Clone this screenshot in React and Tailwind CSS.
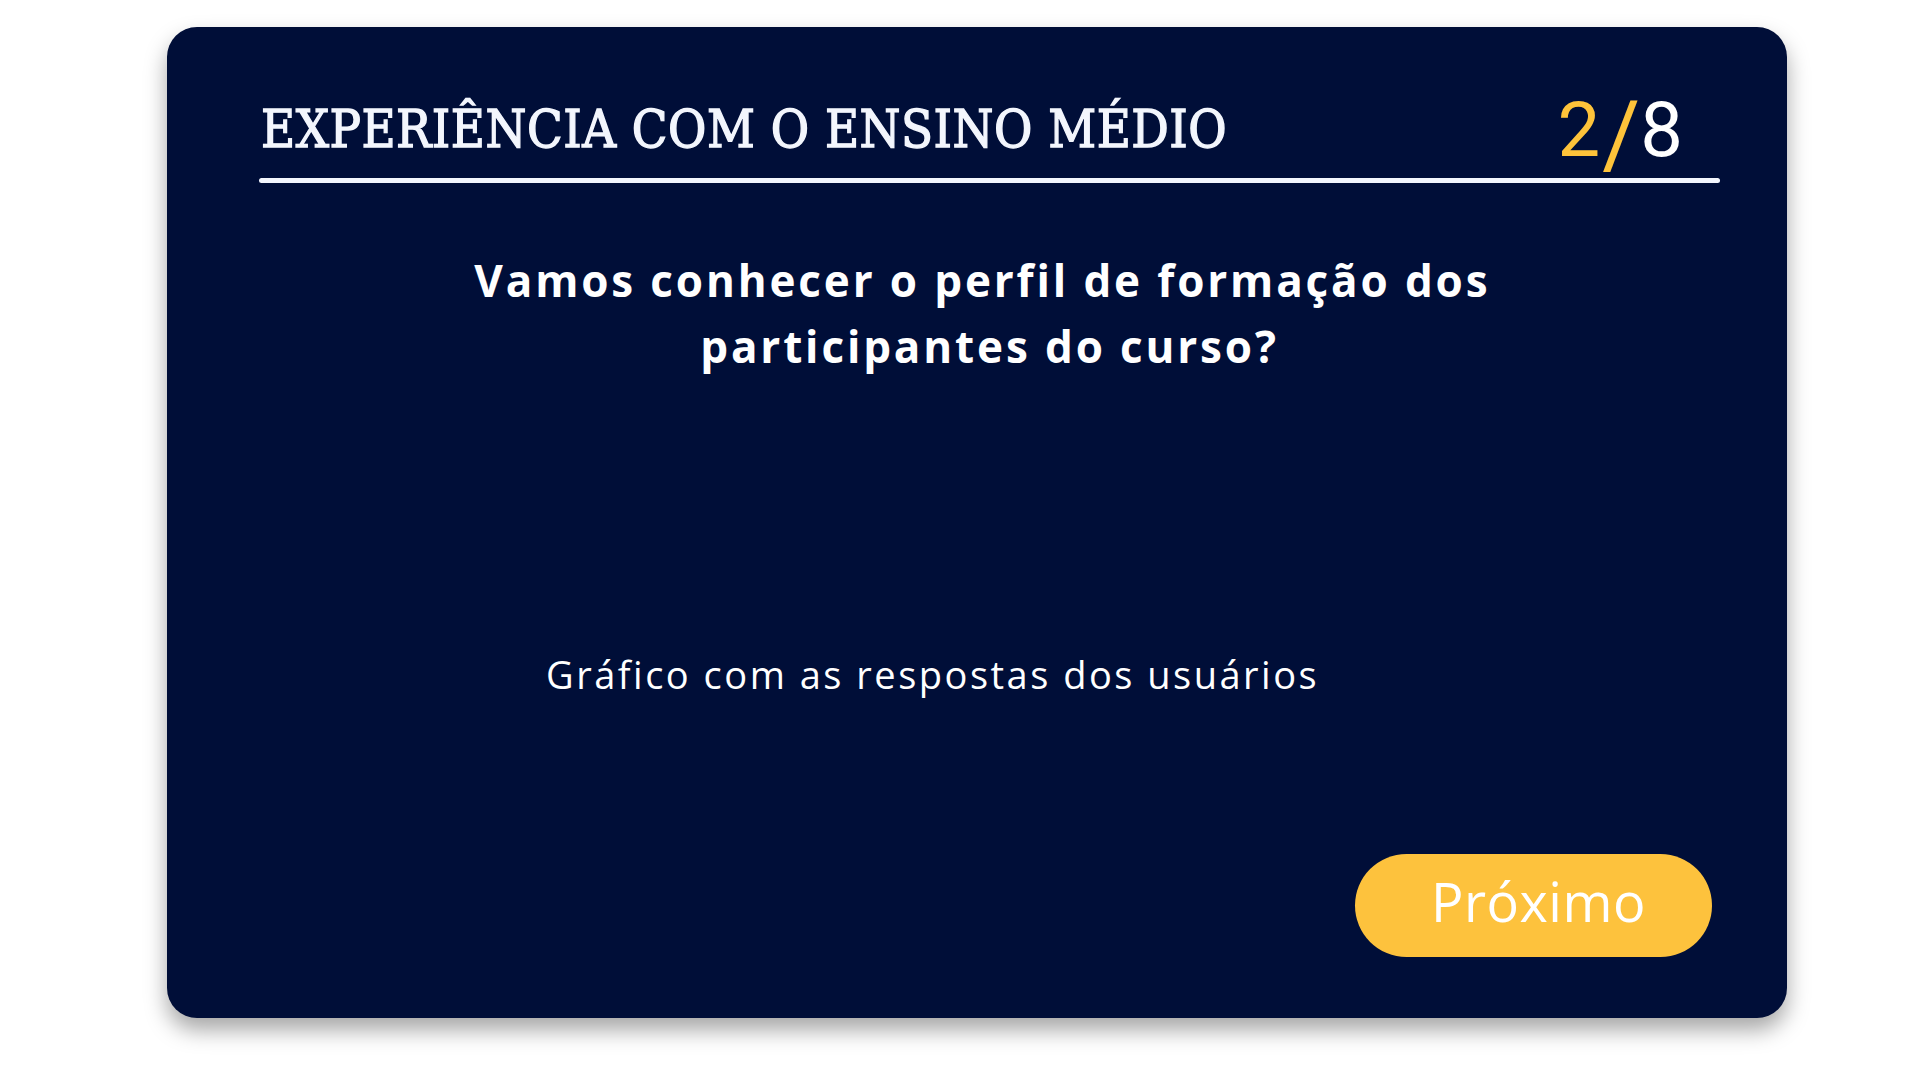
import React from 'react';

const slab = { fontFamily: '"DejaVu Serif Condensed", "DejaVu Serif", serif' };
const sans = { fontFamily: '"Open Sans", "Noto Sans", sans-serif' };
const round = { fontFamily: 'Roboto, "Noto Sans", sans-serif' };

export default function App() {
  return (
    <div className="min-h-screen bg-white pt-[27px] pl-[167px]">
      <div className="w-[1620px] h-[991px] rounded-[30px] bg-[#000e38] shadow-[0_12px_22px_rgba(0,0,0,0.35)] pl-[92px] pr-[67px] pt-[58px] pb-[61px] flex flex-col">
        {/* Header */}
        <div className="flex items-baseline justify-between">
          <h1 style={slab} className="text-[52px] leading-none tracking-[0.5px] text-[#f3f6fd] pl-[2px] -translate-y-[5px] [-webkit-text-stroke:1.3px_#f3f6fd]">
            EXPERIÊNCIA COM O ENSINO MÉDIO
          </h1>
          <div style={round} className="text-[76px] leading-none pr-[37px] translate-y-[4px]">
            <span className="text-[#fec33a]">2</span>
            <span className="text-[#fec33a] text-[92px] align-[-10px] pl-[2px]">/</span>
            <span className="text-white">8</span>
          </div>
        </div>
        <div className="h-[5px] rounded-full bg-[#f3f6fd] mt-[1px]" />

        {/* Question */}
        <h2 style={sans} className="mt-[64px] text-center text-[44px] font-bold leading-[66px] tracking-[0.065em] text-white">
          Vamos conhecer o perfil de formação dos{'\u00a0'}
          <br />
          participantes do curso?
        </h2>

        {/* Chart placeholder */}
        <p style={sans} className="mt-[267px] pl-[287px] text-[38px] leading-[57px] tracking-[2.5px] text-white">
          Gráfico com as respostas dos usuários
        </p>

        <div className="flex-1" />

        {/* Footer */}
        <div className="flex justify-end pr-[8px]">
          <button style={sans} className="w-[357px] h-[103px] rounded-full bg-[#fdc23d] text-[54px] tracking-[0.5px] text-white pb-[8px] pl-[10px]">
            Próximo
          </button>
        </div>
      </div>
    </div>
  );
}
